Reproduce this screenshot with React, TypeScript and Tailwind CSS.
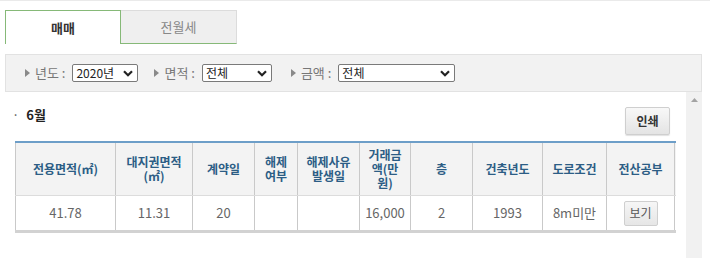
import React from "react";

const font = { fontFamily: '"Noto Sans CJK KR", "Noto Sans", sans-serif' };

function Chevron() {
  return (
    <svg width="10" height="7" viewBox="0 0 10 7" className="shrink-0">
      <path d="M1 1.2 L5 5.2 L9 1.2" fill="none" stroke="#222" strokeWidth="2.2" />
    </svg>
  );
}

function Tri() {
  return (
    <svg width="5" height="8" viewBox="0 0 5 8" className="shrink-0">
      <path d="M0 0 L5 4 L0 8 Z" fill="#8a8a8a" />
    </svg>
  );
}

function Sel({ value, w }: { value: string; w: string }) {
  return (
    <div
      className={`${w} h-[18px] bg-white border border-[#7a7a7a] rounded-[2px] flex items-center justify-between pl-[3px] pr-[4px] text-[12px] text-[#222] leading-none`}
    >
      <span>{value}</span>
      <Chevron />
    </div>
  );
}

const cols = [
  { w: "w-[100px]", h: ["전용면적(㎡)"], d: "41.78" },
  { w: "w-[77px]", h: ["대지권면적", "(㎡)"], d: "11.31" },
  { w: "w-[62px]", h: ["계약일"], d: "20" },
  { w: "w-[43px]", h: ["해제", "여부"], d: "" },
  { w: "w-[62px]", h: ["해제사유", "발생일"], d: "" },
  { w: "w-[51px]", h: ["거래금", "액(만", "원)"], d: "16,000" },
  { w: "w-[62px]", h: ["층"], d: "2" },
  { w: "w-[70px]", h: ["건축년도"], d: "1993" },
  { w: "w-[64px]", h: ["도로조건"], d: "8m미만" },
  { w: "w-[69px]", h: ["전산공부"], d: "btn" },
];

export default function App() {
  return (
    <div style={font} className="w-[710px] h-[258px] bg-white overflow-hidden border-t border-[#eaeaea]">
      <div className="pl-[5px] pt-[9px]">
        {/* tabs */}
        <div className="flex h-[34px]">
          <div className="w-[116px] border-t border-l border-r border-[#86b978] bg-white flex items-center justify-center text-[13px] font-bold text-[#333]">
            매매
          </div>
          <div className="w-[116px] bg-[#efefef] border-t border-r border-[#dcdcdc] border-b border-b-[#86b978] flex items-center justify-center text-[13px] text-[#888]">
            전월세
          </div>
        </div>
        {/* filter bar */}
        <div className="mt-[10px] w-[697px] h-[38px] bg-[#f2f2f2] border border-[#e2e2e2] flex items-center pl-[19px] text-[13px] text-[#777]">
          <div className="flex items-center">
            <Tri />
            <span className="ml-[5px]">년도 :</span>
            <div className="ml-[7px]">
              <Sel value="2020년" w="w-[66px]" />
            </div>
          </div>
          <div className="flex items-center ml-[16px]">
            <Tri />
            <span className="ml-[5px]">면적 :</span>
            <div className="ml-[7px]">
              <Sel value="전체" w="w-[70px]" />
            </div>
          </div>
          <div className="flex items-center ml-[19px]">
            <Tri />
            <span className="ml-[5px]">금액 :</span>
            <div className="ml-[7px]">
              <Sel value="전체" w="w-[117px]" />
            </div>
          </div>
        </div>
        {/* content + scrollbar */}
        <div className="flex w-[697px] h-[170px]">
          <div className="w-[681px] pl-[10px] pr-[10px]">
            <div className="flex items-start justify-between h-[49px]">
              <div className="flex items-center pt-[13px] text-[13px] font-bold text-[#222]">
                <span className="text-[#555] font-normal mr-[7px] -ml-[3px]">·</span>
                <span>6월</span>
              </div>
              <button className="mt-[15px] mr-[6px] w-[45px] h-[28px] border border-[#cfcfcf] rounded-[2px] bg-gradient-to-b from-[#f8f8f8] to-[#e4e4e4] text-[12px] font-bold text-[#333] shadow-[0_1px_1px_rgba(0,0,0,0.12)]">
                인쇄
              </button>
            </div>
            {/* table */}
            <div className="w-[661px] border-t-2 border-[#6d9ec8] border-b-[3px] border-b-[#d2d2d2]">
              <div className="flex bg-[#f3f3f3] h-[53px] border-b border-[#dcdcdc]">
                {cols.map((c, i) => (
                  <div
                    key={i}
                    className={`${c.w} flex flex-col items-center justify-center border-l border-[#c9c9c9] ${i === cols.length - 1 ? "border-r" : ""} text-[12px] font-bold leading-[14px] text-[#2c5d85]`}
                  >
                    {c.h.map((t, j) => (
                      <span key={j}>{t}</span>
                    ))}
                  </div>
                ))}
              </div>
              <div className="flex bg-white h-[34px]">
                {cols.map((c, i) => (
                  <div
                    key={i}
                    className={`${c.w} flex items-center justify-center border-l border-[#c9c9c9] ${i === cols.length - 1 ? "border-r" : ""} text-[13px] text-[#666]`}
                  >
                    {c.d === "btn" ? (
                      <button className="w-[34px] h-[25px] border border-[#cfcfcf] rounded-[2px] bg-gradient-to-b from-[#f6f6f6] to-[#e6e6e6] text-[12px] text-[#555]">
                        보기
                      </button>
                    ) : (
                      c.d
                    )}
                  </div>
                ))}
              </div>
            </div>
          </div>
          <div className="w-[16px] bg-[#f1f1f1] flex justify-center pt-[6px]">
            <svg width="7" height="4" viewBox="0 0 7 4">
              <path d="M0 4 L3.5 0 L7 4 Z" fill="#a3a3a3" />
            </svg>
          </div>
        </div>
      </div>
    </div>
  );
}
